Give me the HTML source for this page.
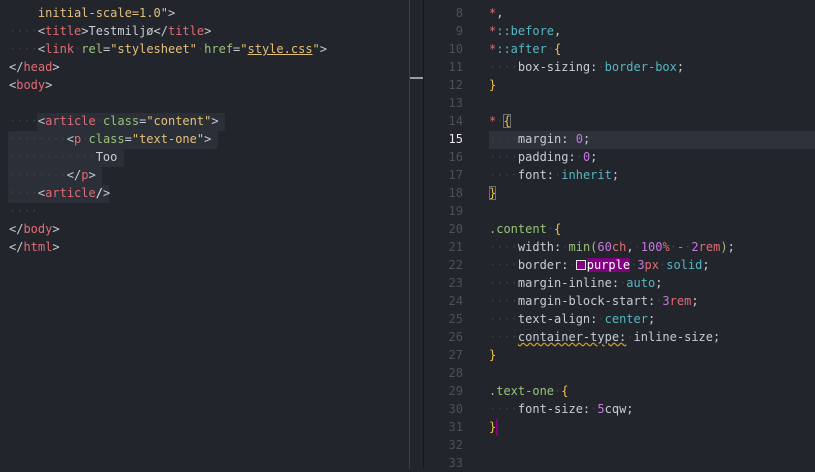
<!DOCTYPE html>
<html><head><meta charset="utf-8"><style>
html,body{margin:0;padding:0;}
body{width:815px;height:469px;background:#22252c;overflow:hidden;position:relative;font-family:"DejaVu Sans Mono","Liberation Mono",monospace;font-size:12px;color:#c8ccd3;}
.l{position:absolute;height:18px;line-height:18px;white-space:pre;}
.t{color:#e06c75}.a{color:#98c379}.s{color:#e5c07b}.c{color:#56b6c2}.n{color:#c678dd}.b{color:#f2c14e}.d{color:#3a3e46}.g{color:#98c379}.w{color:#e6e8eb}
.sel{position:absolute;background:#2b2f37;border-radius:2px}
.num{position:absolute;left:430px;width:33px;text-align:right;color:#4b5059;height:18px;line-height:18px}
</style></head><body>
<div class="sel" style="left:37px;top:113px;width:188px;height:18px"></div>
<div class="sel" style="left:8px;top:131px;width:210px;height:18px"></div>
<div class="sel" style="left:8px;top:149px;width:116px;height:18px"></div>
<div class="sel" style="left:8px;top:167px;width:94px;height:18px"></div>
<div class="sel" style="left:8px;top:185px;width:101px;height:18px"></div>

<div class="l" style="left:9px;top:4px">    <span class="s">initial-scale=1.0"</span>&gt;</div>
<div class="l" style="left:9px;top:22px"><span class="d">····</span>&lt;<span class="t">title</span>&gt;Testmiljø&lt;/<span class="t">title</span>&gt;</div>
<div class="l" style="left:9px;top:40px"><span class="d">····</span>&lt;<span class="t">link</span><span class="d">·</span><span class="a">rel</span>=<span class="s">"stylesheet"</span><span class="d">·</span><span class="a">href</span>=<span class="s">"<span style="text-decoration:underline;text-decoration-color:#e5c07b">style.css</span>"</span>&gt;</div>
<div class="l" style="left:9px;top:58px">&lt;/<span class="t">head</span>&gt;</div>
<div class="l" style="left:9px;top:76px">&lt;<span class="t">body</span>&gt;</div>
<div class="l" style="left:9px;top:112px"><span class="d">····</span>&lt;<span class="t">article</span><span class="d">·</span><span class="a">class</span>=<span class="s">"content"</span>&gt;</div>
<div class="l" style="left:9px;top:130px"><span class="d">········</span>&lt;<span class="t">p</span><span class="d">·</span><span class="a">class</span>=<span class="s">"text-one"</span>&gt;</div>
<div class="l" style="left:9px;top:148px"><span class="d">············</span>Too</div>
<div class="l" style="left:9px;top:166px"><span class="d">········</span>&lt;/<span class="t">p</span>&gt;</div>
<div class="l" style="left:9px;top:184px"><span class="d">····</span>&lt;<span class="t">article</span><span class="w">/</span>&gt;</div>
<div class="l" style="left:9px;top:202px"><span class="d">····</span></div>
<div class="l" style="left:9px;top:220px">&lt;/<span class="t">body</span>&gt;</div>
<div class="l" style="left:9px;top:238px">&lt;/<span class="t">html</span>&gt;</div>

<div style="position:absolute;left:409px;top:0;width:1px;height:469px;background:#3a3e46"></div>
<div style="position:absolute;left:410px;top:77px;width:13px;height:2px;background:#9a9ea5"></div>
<div style="position:absolute;left:423px;top:0;width:1px;height:469px;background:#16181c"></div>

<div style="position:absolute;left:489px;top:131px;width:326px;height:18px;background:#2d323b"></div>

<div class="num" style="top:4px">8</div><div class="num" style="top:22px">9</div><div class="num" style="top:40px">10</div><div class="num" style="top:58px">11</div><div class="num" style="top:76px">12</div><div class="num" style="top:94px">13</div><div class="num" style="top:112px">14</div><div class="num" style="top:130px;color:#e6e8eb">15</div><div class="num" style="top:148px">16</div><div class="num" style="top:166px">17</div><div class="num" style="top:184px">18</div><div class="num" style="top:202px">19</div><div class="num" style="top:220px">20</div><div class="num" style="top:238px">21</div><div class="num" style="top:256px">22</div><div class="num" style="top:274px">23</div><div class="num" style="top:292px">24</div><div class="num" style="top:310px">25</div><div class="num" style="top:328px">26</div><div class="num" style="top:346px">27</div><div class="num" style="top:364px">28</div><div class="num" style="top:382px">29</div><div class="num" style="top:400px">30</div><div class="num" style="top:418px">31</div><div class="num" style="top:436px">32</div><div class="num" style="top:454px">33</div>

<div class="l" style="left:489px;top:4px"><span class="t">*</span>,</div>
<div class="l" style="left:489px;top:22px"><span class="t">*</span><span class="c">::before</span>,</div>
<div class="l" style="left:489px;top:40px"><span class="t">*</span><span class="c">::after</span><span class="d">·</span><span class="b">{</span></div>
<div class="l" style="left:489px;top:58px"><span class="d">····</span>box-sizing:<span class="d">·</span><span class="c">border-box</span>;</div>
<div class="l" style="left:489px;top:76px"><span class="b">}</span></div>
<div class="l" style="left:489px;top:112px"><span class="t">*</span><span class="d">·</span><span class="b" style="outline:1px solid #6b6f76;outline-offset:-1px">{</span></div>
<div class="l" style="left:489px;top:130px"><span class="d">····</span>margin:<span class="d">·</span><span class="n">0</span>;</div>
<div class="l" style="left:489px;top:148px"><span class="d">····</span>padding:<span class="d">·</span><span class="n">0</span>;</div>
<div class="l" style="left:489px;top:166px"><span class="d">····</span>font:<span class="d">·</span><span class="c">inherit</span>;</div>
<div class="l" style="left:489px;top:184px"><span class="b" style="outline:1px solid #6b6f76;outline-offset:-1px">}</span></div>
<div class="l" style="left:489px;top:220px"><span class="g">.content</span><span class="d">·</span><span class="b">{</span></div>
<div class="l" style="left:489px;top:238px"><span class="d">····</span>width:<span class="d">·</span><span class="g">min(</span><span class="n">60</span><span class="t">ch</span>,<span class="d">·</span><span class="n">100</span><span class="t">%</span><span class="d">·</span><span class="t">-</span><span class="d">·</span><span class="n">2</span><span class="t">rem</span><span class="g">)</span>;</div>
<div class="l" style="left:489px;top:256px"><span class="d">····</span>border:<span class="d">·</span><span style="display:inline-block;width:8px;height:8px;border:1px solid #e6e8eb;background:#800080;vertical-align:-1px;margin-right:1px"></span><span style="background:#800080;color:#fff">purple</span><span class="d">·</span><span class="n">3</span><span class="t">px</span><span class="d">·</span><span class="c">solid</span>;</div>
<div class="l" style="left:489px;top:274px"><span class="d">····</span>margin-inline:<span class="d">·</span><span class="c">auto</span>;</div>
<div class="l" style="left:489px;top:292px"><span class="d">····</span>margin-block-start:<span class="d">·</span><span class="n">3</span><span class="t">rem</span>;</div>
<div class="l" style="left:489px;top:310px"><span class="d">····</span>text-align:<span class="d">·</span><span class="c">center</span>;</div>
<div class="l" style="left:489px;top:328px"><span class="d">····</span><span style="text-decoration:underline wavy #d4a017">container-type:</span><span class="d">·</span>inline-size;</div>
<div class="l" style="left:489px;top:346px"><span class="b">}</span></div>
<div class="l" style="left:489px;top:382px"><span class="g">.text-one</span><span class="d">·</span><span class="b">{</span></div>
<div class="l" style="left:489px;top:400px"><span class="d">····</span>font-size:<span class="d">·</span><span class="n">5</span>cqw;</div>
<div class="l" style="left:489px;top:418px"><span class="b">}</span></div>
<div style="position:absolute;left:496px;top:419px;width:2px;height:17px;background:#800080"></div>
</body></html>
